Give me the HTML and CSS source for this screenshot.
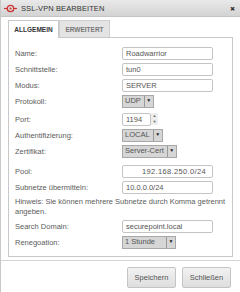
FILE: index.html
```html
<!DOCTYPE html>
<html lang="de">
<head>
    <meta charset="UTF-8">
    <title>SSL-VPN bearbeiten</title>
    <link rel="stylesheet" href="styles.css">
</head>
<body>
    <div class="dialog">
        <div class="titlebar">
            <svg class="logo" width="13" height="9" viewBox="0 0 13 9">
                <line x1="0" y1="4.5" x2="3" y2="4.5" stroke="#c33" stroke-width="1.2"/>
                <line x1="10" y1="4.5" x2="13" y2="4.5" stroke="#c33" stroke-width="1.2"/>
                <circle cx="6.5" cy="4.5" r="3.2" fill="none" stroke="#c33" stroke-width="1.3"/>
                <circle cx="6.5" cy="4.5" r="1.1" fill="#c33"/>
            </svg>
            <span class="title">SSL-VPN BEARBEITEN</span>
            <span class="close">&#x2716;</span>
        </div>

        <div class="tabs">
            <div class="tab active">ALLGEMEIN</div>
            <div class="tab">ERWEITERT</div>
        </div>

        <div class="panel">
            <div class="row">
                <span class="label">Name:</span>
                <span class="input">Roadwarrior</span>
            </div>
            <div class="row">
                <span class="label">Schnittstelle:</span>
                <span class="input">tun0</span>
            </div>
            <div class="row">
                <span class="label">Modus:</span>
                <span class="input">SERVER</span>
            </div>
            <div class="row">
                <span class="label">Protokoll:</span>
                <span class="select"><span class="value">UDP</span><span class="arrow">&#9660;</span></span>
            </div>
            <div class="row gap-sm">
                <span class="label">Port:</span>
                <span class="input short">1194</span>
                <span class="spinner"><span>&#9650;</span><span>&#9660;</span></span>
            </div>
            <div class="row">
                <span class="label">Authentifizierung:</span>
                <span class="select"><span class="value">LOCAL</span><span class="arrow">&#9660;</span></span>
            </div>
            <div class="row">
                <span class="label">Zertifikat:</span>
                <span class="select"><span class="value">Server-Cert</span><span class="arrow">&#9660;</span></span>
            </div>
            <div class="row gap-md">
                <span class="label">Pool:</span>
                <span class="input pool">192.168.250.0/24</span>
            </div>
            <div class="row">
                <span class="label">Subnetze übermitteln:</span>
                <span class="input">10.0.0.0/24</span>
            </div>
            <p class="hint">Hinweis: Sie können mehrere Subnetze durch Komma getrennt angeben.</p>
            <div class="row">
                <span class="label">Search Domain:</span>
                <span class="input">securepoint.local</span>
            </div>
            <div class="row">
                <span class="label">Renegoation:</span>
                <span class="select"><span class="value wide">1 Stunde</span><span class="arrow">&#9660;</span></span>
            </div>
        </div>

        <div class="footer">
            <button class="btn">Speichern</button>
            <button class="btn">Schließen</button>
        </div>
    </div>
</body>
</html>
```

FILE: styles.css
```css
body {
    margin: 0;
    font-family: "Liberation Sans", Arial, sans-serif;
    font-size: 7.5px;
    color: #5c5c5c;
    background: #fff;
}
.dialog {
    width: 240px;
    height: 292px;
    box-sizing: border-box;
    border-left: 1px solid #c8c8c8;
}
.titlebar {
    height: 17px;
    display: flex;
    align-items: center;
    padding: 0 5px 0 3px;
    background: linear-gradient(#e9e9e9, #d3d3d3);
    border-bottom: 1px solid #c4c4c4;
    box-sizing: border-box;
}
.logo {
    margin-right: 4px;
}
.title {
    flex: 1;
    color: #333;
    font-size: 7.5px;
    letter-spacing: 0.1px;
}
.close {
    font-size: 6px;
    color: #333;
}
.tabs {
    display: flex;
    margin: 3px 0 0 7px;
    height: 17px;
}
.tab {
    width: 51px;
    display: flex;
    align-items: center;
    justify-content: center;
    font-size: 6.5px;
    font-weight: bold;
    color: #777;
    background: #e4e4e4;
    border: 1px solid #cfcfcf;
    border-bottom: none;
    box-sizing: border-box;
}
.tab.active {
    color: #333;
    background: #fff;
    border-color: #c8c8c8;
    height: 18px;
    position: relative;
    z-index: 1;
}
.panel {
    margin: 0 7px;
    height: 220px;
    box-sizing: border-box;
    border: 1px solid #c8c8c8;
    padding: 7px 6px 0 6px;
}
.row {
    display: flex;
    align-items: center;
    height: 16px;
}
.row.gap-sm {
    margin-top: 2px;
}
.row.gap-md {
    margin-top: 4px;
}
.label {
    width: 107px;
    flex-shrink: 0;
}
.input {
    width: 91px;
    height: 13px;
    box-sizing: border-box;
    border: 1px solid #c4c4c4;
    border-radius: 2px;
    background: #fff;
    padding: 0 3px;
    line-height: 11px;
    color: #555;
}
.input.short {
    width: 29px;
}
.input.pool {
    text-align: right;
    letter-spacing: 0.35px;
    padding-right: 6px;
}
.spinner {
    display: flex;
    flex-direction: column;
    width: 7px;
    height: 12px;
    font-size: 4px;
    line-height: 6px;
    text-align: center;
    color: #666;
    background: #eee;
}
.select {
    display: flex;
    height: 11px;
    border: 1px solid #a8a8a8;
    background: #d6d6d6;
    line-height: 9px;
    color: #555;
}
.select .value {
    padding: 0 3px 0 2px;
    border-right: 1px solid #999;
}
.select .value.wide {
    padding-right: 11px;
}
.select .arrow {
    width: 8px;
    font-size: 5px;
    text-align: center;
    color: #222;
}
.hint {
    margin: 2px 0 0;
    line-height: 9.5px;
    height: 21px;
}
.footer {
    margin-top: 3px;
    border-top: 1px solid #d4d4d4;
    display: flex;
    justify-content: flex-end;
    gap: 6px;
    padding: 6px 9px 0 0;
}
.btn {
    width: 49px;
    height: 21px;
    font-family: "Liberation Sans", Arial, sans-serif;
    font-size: 7.5px;
    color: #555;
    background: linear-gradient(#f2f2f2, #dedede);
    border: 1px solid #c4c4c4;
    border-radius: 2px;
    padding: 0;
}
```
